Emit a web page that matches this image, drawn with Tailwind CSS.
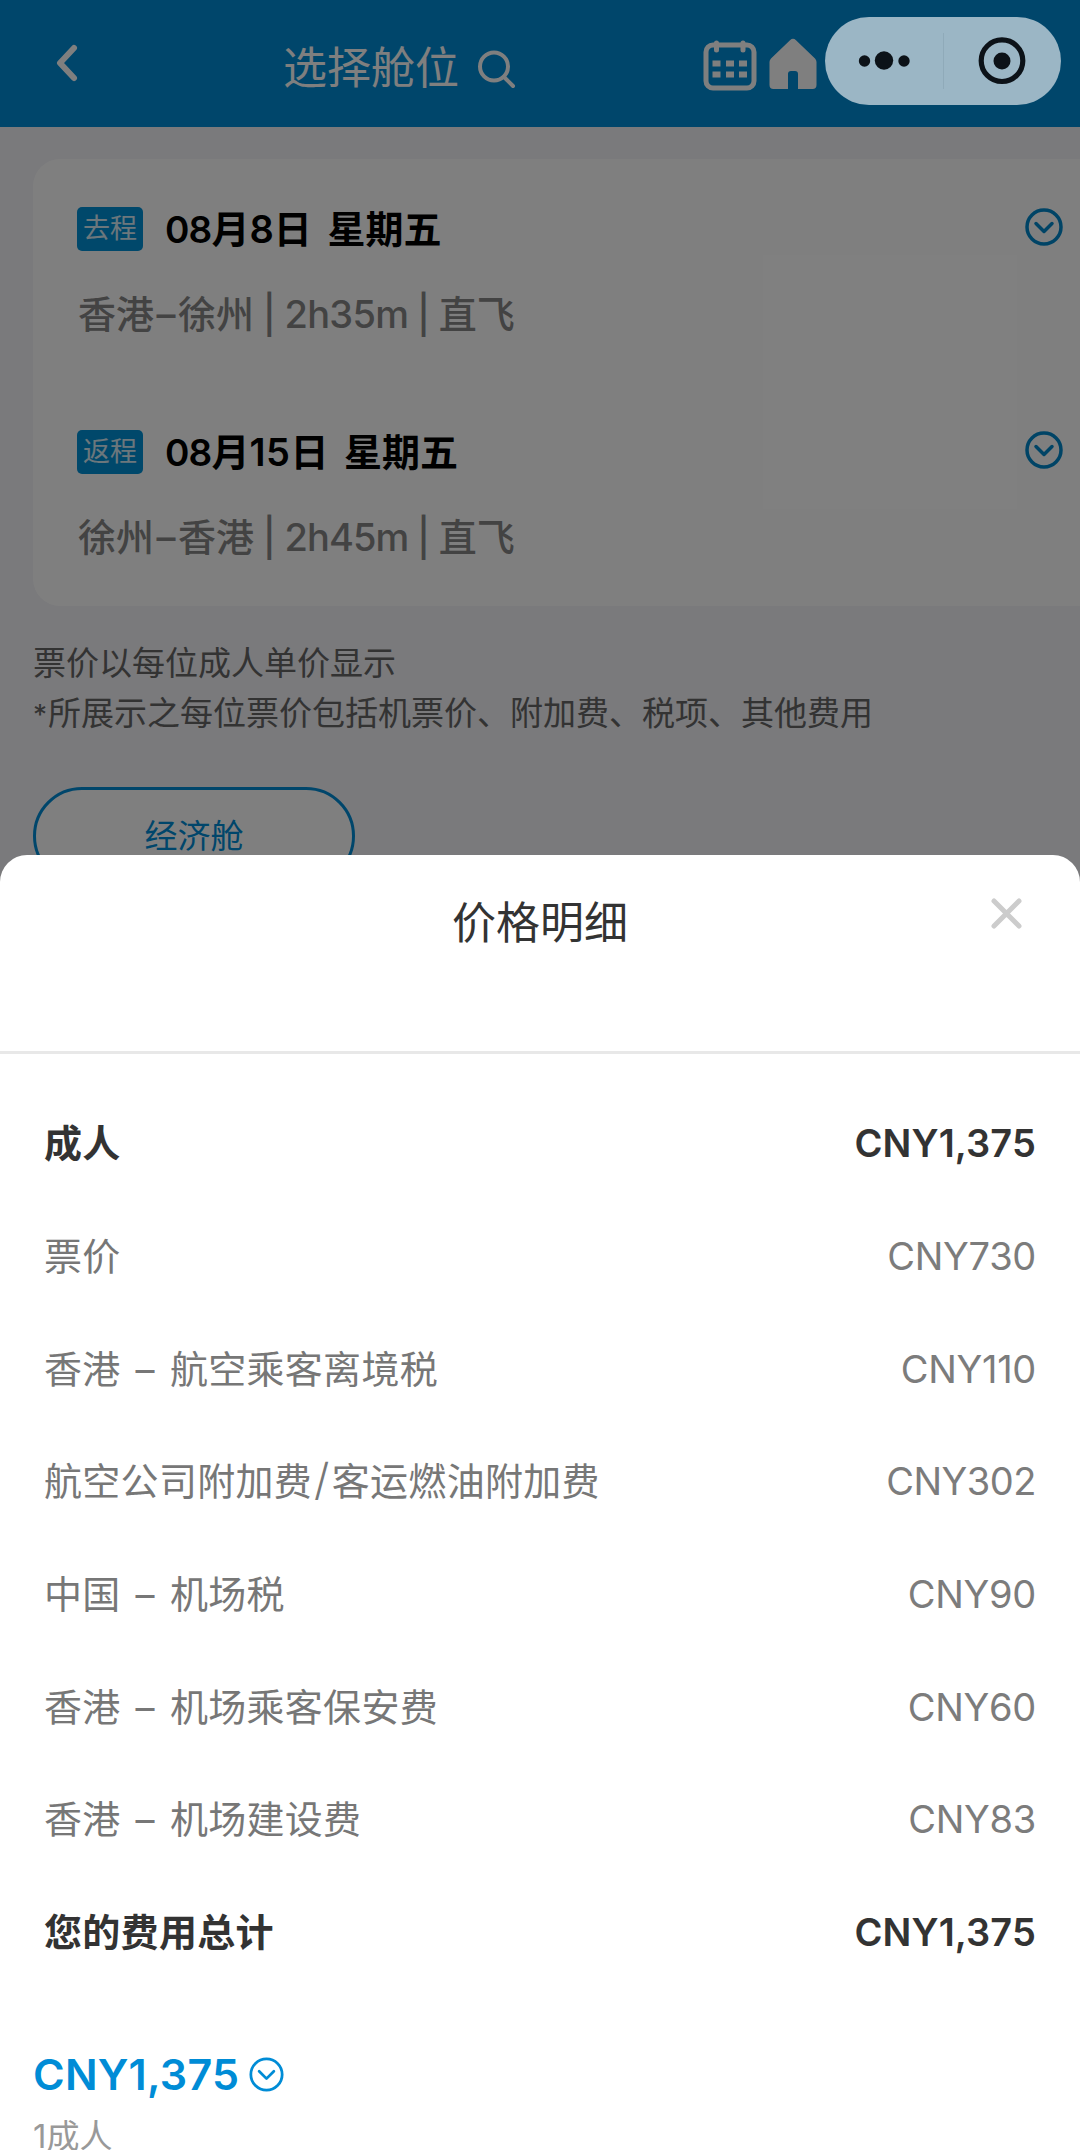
<!DOCTYPE html>
<html lang="zh-CN">
<head>
<meta charset="utf-8">
<title>选择舱位</title>
<script src="https://cdn.jsdelivr.net/npm/@tailwindcss/browser@4"></script>
</head>
<body class="relative h-[2150px] w-[1080px] overflow-hidden bg-[#f4f4f8] font-['Inter','Noto_Sans_CJK_SC',sans-serif]">

<!-- Page behind the sheet -->
<header class="flex h-[127px] items-center bg-[#008cd6] text-white">
  <svg class="mt-[-1px] ml-[55px] h-[40px] w-[24px]" viewBox="0 0 24 40" fill="none" stroke="currentColor" stroke-width="6" stroke-linecap="round" stroke-linejoin="round"><path d="M19 5 5 20l14 15"/></svg>
  <h1 class="mt-[9px] ml-[204px] text-[44px] leading-[60px]">选择舱位</h1>
  <svg class="mt-[10px] ml-[18px] h-[40px] w-[40px]" viewBox="0 0 40 40" fill="none" stroke="currentColor" stroke-width="4" stroke-linecap="round"><circle cx="17" cy="17.500" r="14"/><path d="M27 28 36 37"/></svg>
  <svg class="mt-[4px] ml-[186px] h-[54px] w-[54px]" viewBox="0 0 54 54" fill="none" stroke="currentColor" stroke-width="5" stroke-linecap="round"><rect x="3" y="6" width="48" height="43" rx="7"/><path d="M13.500 4v7M40 4v7"/><g fill="currentColor" stroke="none"><path d="M9.500 21.500h8v6h-8zM23 21.500h8v6h-8zM36 21.500h8v6h-8zM9.500 32.500h8v6h-8zM23 32.500h8v6h-8zM36 32.500h8v6h-8z"/></g></svg>
  <svg class="ml-[12px] h-[52px] w-[48px]" viewBox="0 0 48 52" fill="currentColor"><path d="M21 2.200a4.500 4.500 0 0 1 6 0l19 18.300a5 5 0 0 1 1.500 3.600V47a4 4 0 0 1-4 4H29V36a3 3 0 0 0-3-3h-4a3 3 0 0 0-3 3v15H4.500a4 4 0 0 1-4-4V24.100A5 5 0 0 1 2 20.500z"/></svg>
</header>

<main class="pl-[33px]">
  <section class="mt-[32px] h-[447px] w-[1080px] rounded-[27px] bg-white pl-[44px]">
    <div class="flex h-[223px] flex-col pt-[46px]">
      <div class="flex h-[48px] items-center">
        <span class="flex h-[44px] w-[66px] items-center justify-center rounded-[5px] bg-[#0090d6] pb-[2px] text-[27px] leading-none text-white/85">去程</span>
        <h2 class="ml-[22px] text-[38px] font-semibold text-black [word-spacing:6px]"><span class="text-[37px] tracking-[-0.800px]">08</span>月<span class="text-[38px]">8</span>日 星期五</h2>
        <svg class="mt-[-4px] ml-auto mr-[50px] h-[38px] w-[38px] text-[#0088cc]" viewBox="0 0 38 38" fill="none" stroke="currentColor" stroke-width="3.500" stroke-linecap="round" stroke-linejoin="round"><circle cx="19" cy="19" r="17"/><path d="m11 15.500 8 8 8-8"/></svg>
      </div>
      <p class="mt-[33px] pl-px text-[38px] leading-[56px] font-medium whitespace-pre text-[#868686] [word-spacing:-1.500px]">香港<span class="mx-[2.500px]">–</span>徐州 | <span class="tracking-[-0.700px]">2h35m</span> | 直飞</p>
    </div>
    <div class="flex h-[223px] flex-col pt-[46px]">
      <div class="flex h-[48px] items-center">
        <span class="flex h-[44px] w-[66px] items-center justify-center rounded-[5px] bg-[#0090d6] pb-[2px] text-[27px] leading-none text-white/85">返程</span>
        <h2 class="ml-[22px] text-[38px] font-semibold text-black [word-spacing:6px]"><span class="text-[37px] tracking-[-0.800px]">08</span>月<span class="text-[38px] tracking-[0.500px]">15</span>日 星期五</h2>
        <svg class="mt-[-4px] ml-auto mr-[50px] h-[38px] w-[38px] text-[#0088cc]" viewBox="0 0 38 38" fill="none" stroke="currentColor" stroke-width="3.500" stroke-linecap="round" stroke-linejoin="round"><circle cx="19" cy="19" r="17"/><path d="m11 15.500 8 8 8-8"/></svg>
      </div>
      <p class="mt-[33px] pl-px text-[38px] leading-[56px] font-medium whitespace-pre text-[#868686] [word-spacing:-1.500px]">徐州<span class="mx-[2.500px]">–</span>香港 | <span class="tracking-[-0.900px]">2h45m</span> | 直飞</p>
    </div>
  </section>
  <p class="mt-[33px] h-[99px] text-[33px] leading-[49.500px] text-[#666]">票价以每位成人单价显示<br><span class="mr-[1px] text-[28px] leading-none">*</span>所展示之每位票价包括机票价、附加费、税项、其他费用</p>
  <button class="mt-[49px] flex h-[98px] w-[322px] items-center justify-center rounded-full border-[3px] border-[#008cd6] bg-white pt-[2px] text-[33px] text-[#008cd6]">经济舱</button>
</main>

<!-- Dimming layer -->
<div class="absolute inset-0 bg-black/50"></div>

<!-- Mini-program capsule -->
<div class="absolute top-[17px] left-[825px] flex h-[88px] w-[236px] items-center rounded-full bg-[#9bb6c5] text-[#0c1218]">
  <svg class="h-[88px] w-[118px]" viewBox="0 0 118 88" fill="currentColor"><circle cx="39.500" cy="44" r="5.700"/><circle cx="59" cy="43.500" r="9.200"/><circle cx="79" cy="44" r="5.700"/></svg>
  <span class="h-[56px] w-px bg-[#8faab9]"></span>
  <svg class="h-[88px] w-[117px]" viewBox="0 0 117 88" fill="none"><circle cx="58" cy="43.700" r="20.800" stroke="currentColor" stroke-width="5.200"/><circle cx="58" cy="44" r="8.500" fill="currentColor"/></svg>
</div>

<!-- Price sheet -->
<section class="absolute inset-x-0 top-[855px] bottom-0 flex flex-col rounded-t-[27px] bg-white">
  <div class="relative h-[199px] shrink-0 border-b-[3px] border-[#e8e8e8] pt-[38px] text-center">
    <h2 class="text-[44px] leading-[60px] text-[#333]">价格明细</h2>
    <svg class="absolute top-[42px] left-[990px] h-[33px] w-[33px] text-[#ccc]" viewBox="0 0 33 33" fill="none" stroke="currentColor" stroke-width="5" stroke-linecap="round"><path d="m4 4 25 25M29 4 4 29"/></svg>
  </div>
  <dl class="flex flex-col pt-[33px] pr-[44px] pl-[44px] text-[38px] leading-[60px] text-[#777]">
    <div class="flex h-[112.700px] items-center justify-between font-semibold text-[#333]"><dt class="tracking-[0.300px]">成人</dt><dd class="tracking-[0.100px]">CNY1,375</dd></div>
    <div class="flex h-[112.700px] items-center justify-between"><dt class="tracking-[0.300px]">票价</dt><dd class="tracking-[-0.300px] text-[#7c7c7c]">CNY730</dd></div>
    <div class="flex h-[112.700px] items-center justify-between"><dt class="tracking-[0.300px] [word-spacing:4px]">香港 – 航空乘客离境税</dt><dd class="tracking-[-0.300px] text-[#7c7c7c]">CNY110</dd></div>
    <div class="flex h-[112.700px] items-center justify-between"><dt class="tracking-[0.300px]">航空公司附加费<span class="mx-[2px] text-[44px] leading-none font-light">/</span>客运燃油附加费</dt><dd class="tracking-[-0.500px] text-[#7c7c7c]">CNY302</dd></div>
    <div class="flex h-[112.700px] items-center justify-between"><dt class="tracking-[0.300px] [word-spacing:4px]">中国 – 机场税</dt><dd class="tracking-[-0.300px] text-[#7c7c7c]">CNY90</dd></div>
    <div class="flex h-[112.700px] items-center justify-between"><dt class="tracking-[0.300px] [word-spacing:4px]">香港 – 机场乘客保安费</dt><dd class="tracking-[-0.300px] text-[#7c7c7c]">CNY60</dd></div>
    <div class="flex h-[112.700px] items-center justify-between"><dt class="tracking-[0.300px] [word-spacing:4px]">香港 – 机场建设费</dt><dd class="tracking-[-0.300px] text-[#7c7c7c]">CNY83</dd></div>
    <div class="flex h-[112.700px] items-center justify-between font-semibold text-[#333]"><dt class="tracking-[0.300px]">您的费用总计</dt><dd class="tracking-[0.100px]">CNY1,375</dd></div>
  </dl>
  <footer class="mt-[56px] pl-[33px]">
    <div class="flex h-[60px] items-center text-[#008cd6]">
      <strong class="text-[43px] font-semibold tracking-[0.200px]">CNY1,375</strong>
      <svg class="ml-[10px] h-[35px] w-[35px]" viewBox="0 0 38 38" fill="none" stroke="currentColor" stroke-width="3" stroke-linecap="round" stroke-linejoin="round"><circle cx="19" cy="19" r="17"/><path d="m11 15.500 8 8 8-8"/></svg>
    </div>
    <p class="mt-[6px] h-[40px] overflow-hidden text-[33px] leading-[50px] text-[#999]">1成人</p>
  </footer>
</section>
</body>
</html>
